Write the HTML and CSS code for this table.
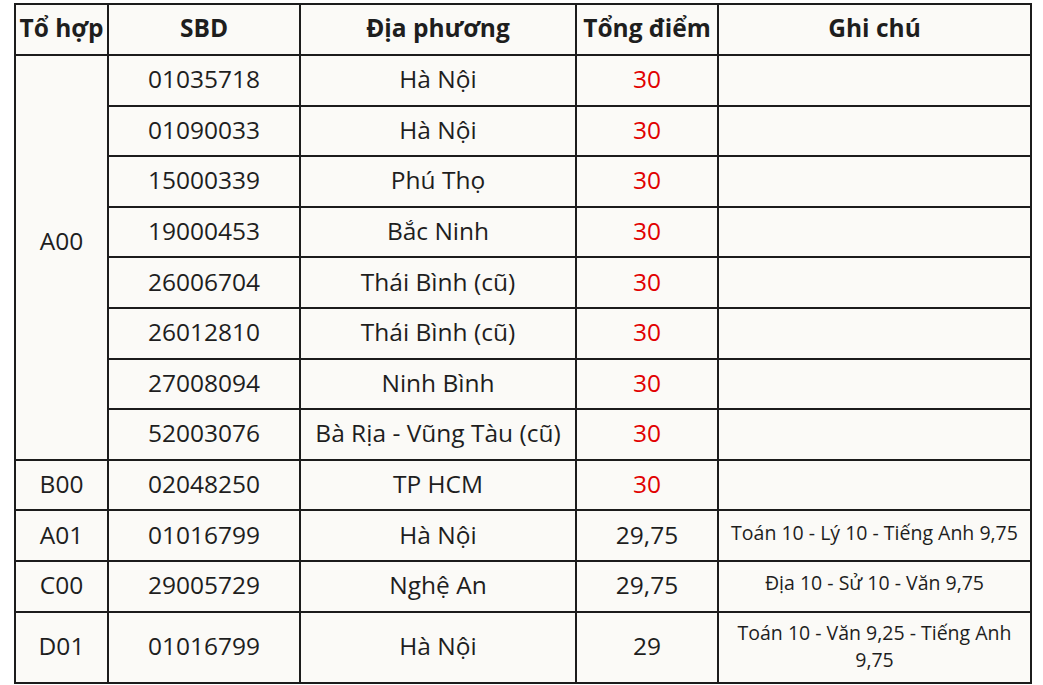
FILE: index.html
```html
<!DOCTYPE html>
<html lang="vi">
<head>
<meta charset="utf-8">
<link rel="stylesheet" href="styles.css">
</head>
<body>
<table class="scores">
  <colgroup>
    <col class="c1"><col class="c2"><col class="c3"><col class="c4"><col class="c5">
  </colgroup>
  <thead>
    <tr><th>Tổ hợp</th><th>SBD</th><th>Địa phương</th><th>Tổng điểm</th><th>Ghi chú</th></tr>
  </thead>
  <tbody>
    <tr><td rowspan="8" class="group">A00</td><td>01035718</td><td>Hà Nội</td><td class="red">30</td><td></td></tr>
    <tr><td>01090033</td><td>Hà Nội</td><td class="red">30</td><td></td></tr>
    <tr><td>15000339</td><td>Phú Thọ</td><td class="red">30</td><td></td></tr>
    <tr><td>19000453</td><td>Bắc Ninh</td><td class="red">30</td><td></td></tr>
    <tr><td>26006704</td><td>Thái Bình (cũ)</td><td class="red">30</td><td></td></tr>
    <tr><td>26012810</td><td>Thái Bình (cũ)</td><td class="red">30</td><td></td></tr>
    <tr><td>27008094</td><td>Ninh Bình</td><td class="red">30</td><td></td></tr>
    <tr><td>52003076</td><td>Bà Rịa - Vũng Tàu (cũ)</td><td class="red">30</td><td></td></tr>
    <tr><td>B00</td><td>02048250</td><td>TP HCM</td><td class="red">30</td><td></td></tr>
    <tr><td>A01</td><td>01016799</td><td>Hà Nội</td><td>29,75</td><td class="note">Toán 10 - Lý 10 - Tiếng Anh 9,75</td></tr>
    <tr><td>C00</td><td>29005729</td><td>Nghệ An</td><td>29,75</td><td class="note">Địa 10 - Sử 10 - Văn 9,75</td></tr>
    <tr class="tall"><td>D01</td><td>01016799</td><td>Hà Nội</td><td>29</td><td class="note">Toán 10 - Văn 9,25 - Tiếng Anh 9,75</td></tr>
  </tbody>
</table>
</body>
</html>
```
FILE: styles.css
```css
html, body {
  margin: 0;
  padding: 0;
  background: #ffffff;
}
body {
  padding: 3px 0 0 14px;
  font-family: "Open Sans", "Noto Sans", sans-serif;
  color: #1e1e1e;
}
.scores {
  border-collapse: collapse;
  table-layout: fixed;
  width: 1016px;
  background: #fbfaf7;
}
.c1 { width: 93px; }
.c2 { width: 192px; }
.c3 { width: 276px; }
.c4 { width: 142px; }
.c5 { width: 313px; }
.scores th, .scores td {
  border: 2px solid #1c1c1c;
  text-align: center;
  vertical-align: middle;
  padding: 0 4px 2px;
  height: 46.6px;
  font-size: 24.5px;
  line-height: 28px;
}
.scores th {
  font-weight: 700;
  white-space: nowrap;
  padding: 0 2px 3px;
  height: 46px;
}
.scores td.group {
  padding-bottom: 32px;
}
.scores td.red {
  color: #e10000;
}
.scores td.note {
  font-size: 19.5px;
  line-height: 27px;
  padding: 0 8px 7px;
  height: 41.6px;
}
.scores tr.tall td {
  height: 67px;
}
.scores tr.tall td.note {
  height: 66px;
  padding-bottom: 3px;
}
```
